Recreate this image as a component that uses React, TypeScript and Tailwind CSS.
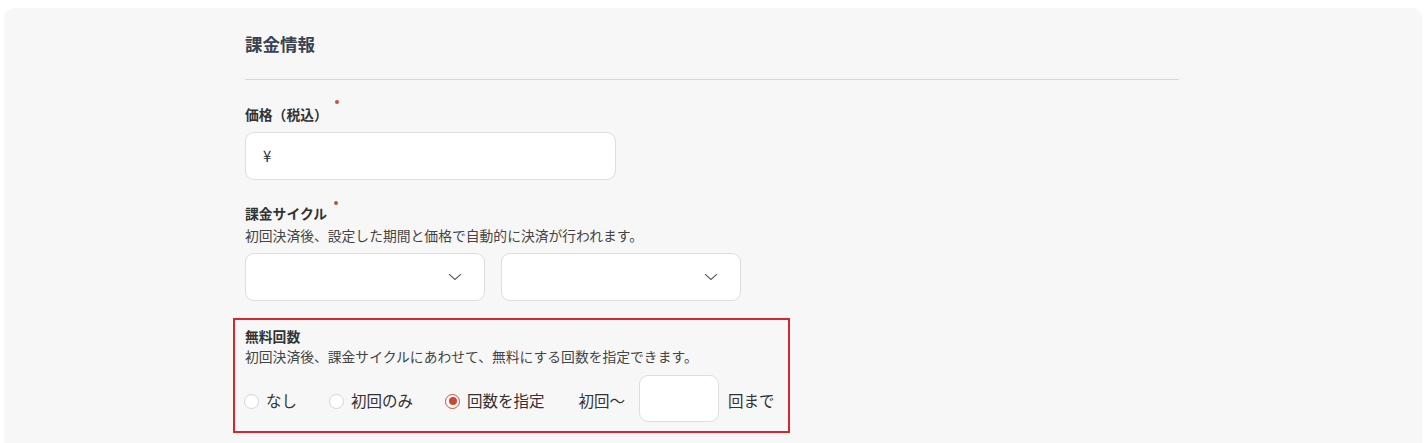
import React from "react";

const font = { fontFamily: '"Noto Sans CJK JP", "Noto Sans", sans-serif' };

function Required({ top }: { top: string }) {
  return <span className={"absolute left-[calc(100%+7px)] w-[4px] h-[4px] rounded-full bg-[#c9503c] " + top} />;
}

function Chevron() {
  return (
    <svg width="14" height="8" viewBox="0 0 14 8" fill="none">
      <path d="M1 1.2L7 6.5L13 1.2" stroke="#555" strokeWidth="1.1" />
    </svg>
  );
}

function Radio({ label, checked }: { label: string; checked?: boolean }) {
  return (
    <div className="flex items-center gap-[7px]">
      <span
        className={
          "mt-[3px] w-[15px] h-[15px] rounded-full bg-white border flex items-center justify-center " +
          (checked ? "border-[#c9503c]" : "border-[#d4d4d4]")
        }
      >
        {checked && <span className="w-[8px] h-[8px] rounded-full bg-[#d0472f]" />}
      </span>
      <span className="text-[15.5px] leading-[22px] text-[#333]">{label}</span>
    </div>
  );
}

export default function App() {
  return (
    <div className="bg-white w-[1426px] h-[443px] overflow-hidden pt-[8px] px-[4px]" style={font}>
      <div className="bg-[#f7f7f7] rounded-[10px] h-[460px] pl-[241px] pt-[23px]">
        <div className="w-[934px] flex flex-col">
          <h2 className="text-[17.5px] leading-[26px] font-bold text-[#3b4250]">課金情報</h2>
          <div className="mt-[22px] h-px bg-[#d8d8d8]" />

          <div className="mt-[24px] text-[13.8px] leading-[20px] font-bold text-[#333]">
            <span className="relative">
              価格（税込）
              <Required top="top-[-4px]" />
            </span>
          </div>
          <div className="mt-[8px] w-[371px] h-[48px] bg-white border border-[#dedede] rounded-[9px] flex items-center pl-[17px]">
            <span className="text-[15px] text-[#333]">¥</span>
          </div>

          <div className="mt-[22px] text-[13.8px] leading-[22px] font-bold text-[#333]">
            <span className="relative">
              課金サイクル
              <Required top="top-[-2px]" />
            </span>
          </div>
          <p className="text-[13.8px] leading-[22px] text-[#444]">初回決済後、設定した期間と価格で自動的に決済が行われます。</p>
          <div className="mt-[7px] flex gap-[16px]">
            <div className="w-[240px] h-[48px] bg-white border border-[#dedede] rounded-[9px] flex items-center justify-end pr-[22px]">
              <Chevron />
            </div>
            <div className="w-[240px] h-[48px] bg-white border border-[#dedede] rounded-[9px] flex items-center justify-end pr-[22px]">
              <Chevron />
            </div>
          </div>

          <div className="mt-[17px] ml-[-12px] w-[557px] border-2 border-[#d7262e] pl-[9px] pt-[6px] pb-[9px]">
            <div className="pl-px text-[13.8px] leading-[20px] font-bold text-[#333]">無料回数</div>
            <p className="pl-px text-[13.8px] leading-[20px] text-[#444]">初回決済後、課金サイクルにあわせて、無料にする回数を指定できます。</p>
            <div className="mt-[9px] flex items-center">
              <div className="mt-[2px] flex items-center">
                <Radio label="なし" />
                <div className="ml-[32px]">
                  <Radio label="初回のみ" />
                </div>
                <div className="ml-[32px]">
                  <Radio label="回数を指定" checked />
                </div>
                <span className="ml-[34px] text-[15.5px] leading-[22px] text-[#333]">初回〜</span>
              </div>
              <div className="ml-[14px] w-[80px] h-[47px] bg-white border border-[#dedede] rounded-[9px]" />
              <span className="mt-[2px] ml-[9px] text-[15.5px] leading-[22px] text-[#333]">回まで</span>
            </div>
          </div>
        </div>
      </div>
    </div>
  );
}
